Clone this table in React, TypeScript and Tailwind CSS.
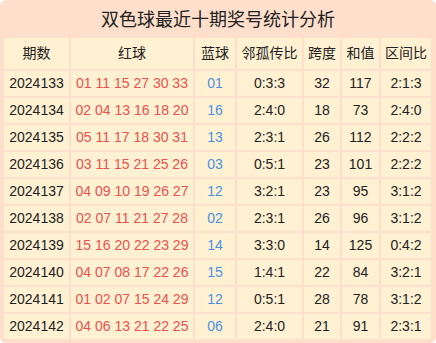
import React from "react";

const rows = [
  ["2024133", "01 11 15 27 30 33", "01", "0:3:3", "32", "117", "2:1:3"],
  ["2024134", "02 04 13 16 18 20", "16", "2:4:0", "18", "73", "2:4:0"],
  ["2024135", "05 11 17 18 30 31", "13", "2:3:1", "26", "112", "2:2:2"],
  ["2024136", "03 11 15 21 25 26", "03", "0:5:1", "23", "101", "2:2:2"],
  ["2024137", "04 09 10 19 26 27", "12", "3:2:1", "23", "95", "3:1:2"],
  ["2024138", "02 07 11 21 27 28", "02", "2:3:1", "26", "96", "3:1:2"],
  ["2024139", "15 16 20 22 23 29", "14", "3:3:0", "14", "125", "0:4:2"],
  ["2024140", "04 07 08 17 22 26", "15", "1:4:1", "22", "84", "3:2:1"],
  ["2024141", "01 02 07 15 24 29", "12", "0:5:1", "28", "78", "3:1:2"],
  ["2024142", "04 06 13 21 22 25", "06", "2:4:0", "21", "91", "2:3:1"],
];

const headers = ["期数", "红球", "蓝球", "邻孤传比", "跨度", "和值", "区间比"];

export default function App() {
  return (
    <div
      className="w-[436px] h-[343px] bg-white"
      style={{ fontFamily: '"Liberation Sans", "Noto Sans CJK SC", sans-serif' }}
    >
      <div className="w-[436px] h-[343px] rounded-[6px] bg-[#fddfcb] px-[4px] flex flex-col">
        <div className="h-[38px] flex items-center justify-center text-[18px] text-[#222] pt-[2px]">
          双色球最近十期奖号统计分析
        </div>
        <div className="grid grid-cols-[65px_122px_40px_65px_36px_37px_50px] gap-[2px] text-[14px] text-[#222]">
          {headers.map((h) => (
            <div key={h} className="h-[31px] bg-[#fff1d2] flex items-center justify-center">
              {h}
            </div>
          ))}
          {rows.map((r) => (
            <React.Fragment key={r[0]}>
              <div className="h-[25px] bg-[#fff1d2] flex items-center justify-center">{r[0]}</div>
              <div className="h-[25px] bg-[#fff1d2] flex items-center justify-center text-[#e8524e]">{r[1]}</div>
              <div className="h-[25px] bg-[#fff1d2] flex items-center justify-center text-[#4a90e2]">{r[2]}</div>
              <div className="h-[25px] bg-[#fff1d2] flex items-center justify-center">{r[3]}</div>
              <div className="h-[25px] bg-[#fff1d2] flex items-center justify-center">{r[4]}</div>
              <div className="h-[25px] bg-[#fff1d2] flex items-center justify-center">{r[5]}</div>
              <div className="h-[25px] bg-[#fff1d2] flex items-center justify-center">{r[6]}</div>
            </React.Fragment>
          ))}
        </div>
      </div>
    </div>
  );
}
